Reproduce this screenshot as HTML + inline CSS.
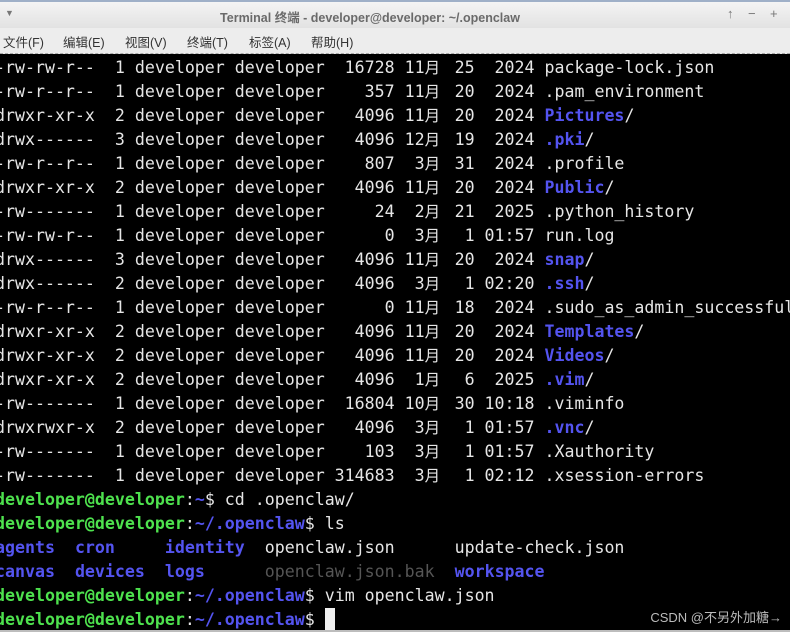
<!DOCTYPE html><html><head><meta charset="utf-8"><style>
*{margin:0;padding:0;box-sizing:border-box}
html,body{width:790px;height:632px;overflow:hidden}
body{background:#000;position:relative;font-family:"Liberation Sans","Noto Sans CJK SC",sans-serif}
#title{position:absolute;left:0;top:0;width:790px;height:28px;background:linear-gradient(#f4f4f4,#e2e2e2);border-top:2px solid #9fb0c8}
#title .t{position:absolute;left:0;width:740px;top:5px;text-align:center;font-size:12.5px;font-weight:bold;color:#6a6a6a}
#title .arr{position:absolute;left:5px;top:6px;font-size:9px;color:#777}
#title .btn{position:absolute;top:4px;font-size:13px;color:#777}
#menu{position:absolute;left:0;top:28px;width:790px;height:26px;background:#ededed;border-bottom:1px dashed #aaa;font-size:12.5px;color:#333}
#menu span{position:absolute;top:4px}
#term{position:absolute;left:-5px;top:56px;font-family:"DejaVu Sans Mono","Liberation Mono","Noto Sans CJK SC",monospace;font-size:16.6px;line-height:24px;color:#e6e6e6;white-space:pre}
#term div{height:24px;overflow:visible}
.m{display:inline-block;width:20px;font-family:"Noto Sans CJK SC",sans-serif;font-size:15.5px;line-height:10px;text-align:left}
.b{color:#5454f0;font-weight:bold}
.g{color:#4ee24e;font-weight:bold}
.gr{color:#555}
.cur{display:inline-block;width:10px;height:22px;background:#f0f0f0;vertical-align:-5px}
#wm{position:absolute;right:8px;top:607px;font-size:13px;color:#bbb}
#bot{position:absolute;left:0;top:630px;width:790px;height:2px;background:#bdbdbd}
</style></head><body>
<div id="title"><span class="arr">▼</span><div class="t">Terminal 终端 - developer@developer: ~/.openclaw</div><span class="btn" style="left:727px">↑</span><span class="btn" style="left:748px">−</span><span class="btn" style="left:770px">+</span></div>
<div id="menu"><span style="left:3px">文件(F)</span><span style="left:63px">编辑(E)</span><span style="left:125px">视图(V)</span><span style="left:187px">终端(T)</span><span style="left:249px">标签(A)</span><span style="left:311px">帮助(H)</span></div>
<div id="term"><div>-rw-rw-r--  1 developer developer  16728 11<span class="m">月</span> 25  2024 package-lock.json</div><div>-rw-r--r--  1 developer developer    357 11<span class="m">月</span> 20  2024 .pam_environment</div><div>drwxr-xr-x  2 developer developer   4096 11<span class="m">月</span> 20  2024 <span class="b">Pictures</span>/</div><div>drwx------  3 developer developer   4096 12<span class="m">月</span> 19  2024 <span class="b">.pki</span>/</div><div>-rw-r--r--  1 developer developer    807  3<span class="m">月</span> 31  2024 .profile</div><div>drwxr-xr-x  2 developer developer   4096 11<span class="m">月</span> 20  2024 <span class="b">Public</span>/</div><div>-rw-------  1 developer developer     24  2<span class="m">月</span> 21  2025 .python_history</div><div>-rw-rw-r--  1 developer developer      0  3<span class="m">月</span>  1 01:57 run.log</div><div>drwx------  3 developer developer   4096 11<span class="m">月</span> 20  2024 <span class="b">snap</span>/</div><div>drwx------  2 developer developer   4096  3<span class="m">月</span>  1 02:20 <span class="b">.ssh</span>/</div><div>-rw-r--r--  1 developer developer      0 11<span class="m">月</span> 18  2024 .sudo_as_admin_successful</div><div>drwxr-xr-x  2 developer developer   4096 11<span class="m">月</span> 20  2024 <span class="b">Templates</span>/</div><div>drwxr-xr-x  2 developer developer   4096 11<span class="m">月</span> 20  2024 <span class="b">Videos</span>/</div><div>drwxr-xr-x  2 developer developer   4096  1<span class="m">月</span>  6  2025 <span class="b">.vim</span>/</div><div>-rw-------  1 developer developer  16804 10<span class="m">月</span> 30 10:18 .viminfo</div><div>drwxrwxr-x  2 developer developer   4096  3<span class="m">月</span>  1 01:57 <span class="b">.vnc</span>/</div><div>-rw-------  1 developer developer    103  3<span class="m">月</span>  1 01:57 .Xauthority</div><div>-rw-------  1 developer developer 314683  3<span class="m">月</span>  1 02:12 .xsession-errors</div><div><span class="g">developer@developer</span>:<span class="b">~</span>$ cd .openclaw/</div><div><span class="g">developer@developer</span>:<span class="b">~/.openclaw</span>$ ls</div><div><span class="b">agents</span>  <span class="b">cron</span>     <span class="b">identity</span>  openclaw.json      update-check.json</div><div><span class="b">canvas</span>  <span class="b">devices</span>  <span class="b">logs</span>      <span class="gr">openclaw.json.bak</span>  <span class="b">workspace</span></div><div><span class="g">developer@developer</span>:<span class="b">~/.openclaw</span>$ vim openclaw.json</div><div><span class="g">developer@developer</span>:<span class="b">~/.openclaw</span>$ <span class="cur"></span></div></div>
<div id="wm">CSDN @不另外加糖→</div>
<div id="bot"></div>
</body></html>
